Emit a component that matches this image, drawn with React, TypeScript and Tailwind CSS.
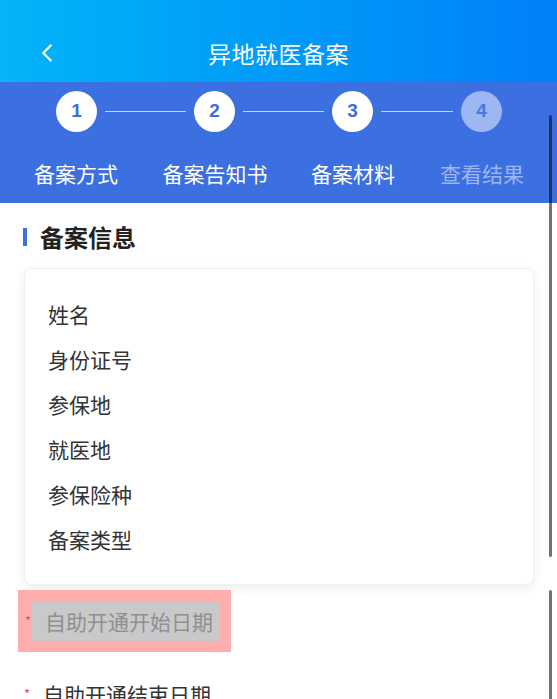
import { ChevronLeft } from "lucide-react";

const steps = [
  { n: 1, label: "备案方式", done: true },
  { n: 2, label: "备案告知书", done: true },
  { n: 3, label: "备案材料", done: true },
  { n: 4, label: "查看结果", done: false },
];

const fields = ["姓名", "身份证号", "参保地", "就医地", "参保险种", "备案类型"];

const StepCircle = ({ n, done }: { n: number; done: boolean }) => (
  <div
    className={`w-[41px] h-[41px] shrink-0 rounded-full flex items-center justify-center font-['Liberation_Sans',sans-serif] font-bold text-[19px] ${
      done ? "bg-white text-[#3b6fe0]" : "bg-[#9cb7f1] text-[#4677e2]"
    }`}
  >
    {n}
  </div>
);

const App = () => {
  return (
    <div className="relative w-[557px] h-[699px] overflow-hidden bg-white font-['Noto_Sans_CJK_SC','Noto_Sans',sans-serif]">
      {/* Header */}
      <header className="h-[82px] bg-gradient-to-r from-[#06b4f8] to-[#0080f8] flex items-end pb-[16px]">
        <div className="relative w-full flex items-center justify-center h-[26px]">
          <ChevronLeft className="absolute left-[32px] w-[30px] h-[30px] text-white" strokeWidth={1.8} />
          <h1 className="text-white text-[23px] leading-none tracking-[0.5px]">异地就医备案</h1>
        </div>
      </header>

      {/* Steps */}
      <section className="bg-[#3c6fe0] pt-[9px] pb-[16px]">
        <div className="flex items-center pl-[56px]">
          <StepCircle n={1} done />
          <div className="mx-[8px] w-[81px] h-px bg-white/70" />
          <StepCircle n={2} done />
          <div className="mx-[8px] w-[81px] h-px bg-white/70" />
          <StepCircle n={3} done />
          <div className="mx-[8px] w-[72px] h-px bg-white/70" />
          <StepCircle n={4} done={false} />
        </div>
        <div className="grid grid-cols-[140px_138px_138px_120px] pl-[6px] mt-[27px]">
          {steps.map((s) => (
            <span
              key={s.n}
              className={`text-center text-[21px] leading-[28px] ${s.done ? "text-white" : "text-[#9cb7f1]"}`}
            >
              {s.label}
            </span>
          ))}
        </div>
      </section>

      {/* Section title */}
      <div className="flex items-center gap-[13px] pl-[23px] mt-[20px]">
        <span className="w-[4px] h-[18px] bg-[#3c6fe0]" />
        <h2 className="text-[24px] leading-[28px] font-bold text-[#222]">备案信息</h2>
      </div>

      {/* Info card */}
      <div className="ml-[24px] mr-[23px] mt-[17px] rounded-lg bg-white border border-[#f0f0f0] shadow-[0_3px_10px_rgba(0,0,0,0.08)] pt-[23px] pb-[22px] pl-[23px]">
        {fields.map((f) => (
          <div key={f} className="h-[45px] flex items-center text-[21px] text-[#333]">
            {f}
          </div>
        ))}
      </div>

      {/* Highlighted field */}
      <div className="mt-[5px] ml-[18px] inline-flex items-center bg-[#ffadad] pl-[7px] pr-[12px] pt-[12px] pb-[11px]">
        <span className="text-[#f04848] text-[13px] leading-none mr-[1px] -mt-[2px]">*</span>
        <span className="h-[39px] flex items-center bg-[#c9c9c9] pl-[13px] pr-[6px] text-[21px] text-[#8f8f8f]">
          自助开通开始日期
        </span>
      </div>

      <div className="flex items-center ml-[24px] mt-[28px]">
        <span className="text-[#f04848] text-[13px] leading-none w-[19px] -mt-[2px]">*</span>
        <span className="text-[21px] leading-[28px] text-[#333]">自助开通结束日期</span>
      </div>

      {/* Scrollbar overlay */}
      <div className="absolute right-[5px] top-[115px] w-[3px] h-[442px] rounded-full bg-black/55" />
      <div className="absolute right-[5px] top-[590px] w-[3px] h-[120px] rounded-full bg-black/55" />
    </div>
  );
};

export default App;
